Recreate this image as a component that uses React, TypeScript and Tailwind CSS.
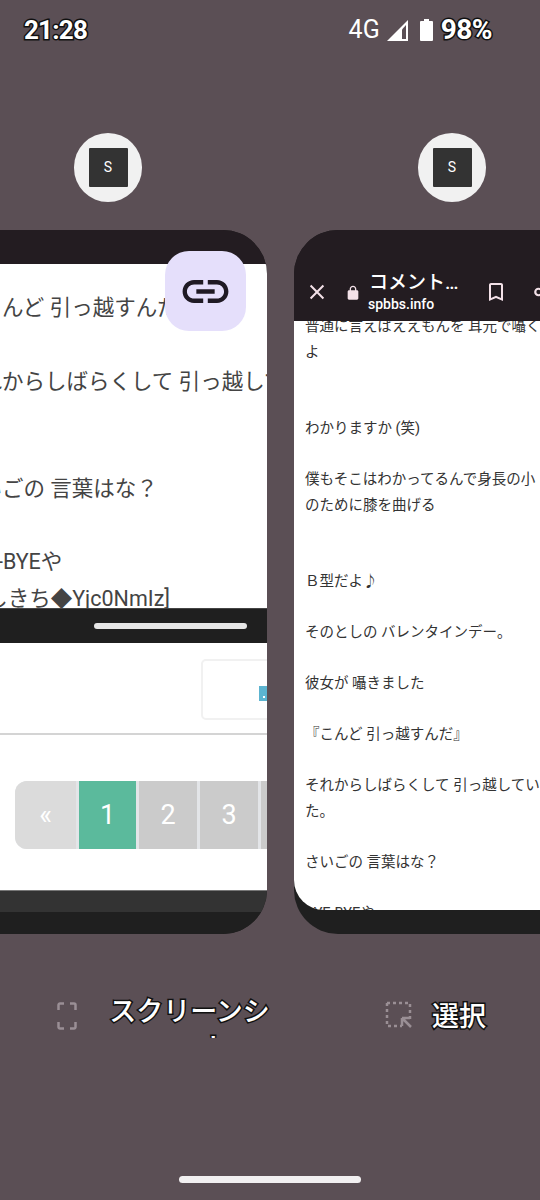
const jp = "font-['Roboto','Noto_Sans_CJK_JP',sans-serif]";

function SiteIcon() {
  return (
    <div className="flex justify-center">
      <div className="w-[68px] h-[69px] rounded-full bg-[#f1f1f1] flex items-center justify-center">
        <div className="w-[39px] h-[39px] rounded-[1px] bg-[#333333] text-white text-[14px] flex items-center justify-center">
          S
        </div>
      </div>
    </div>
  );
}

function LeftCard() {
  const rowCls = "h-[37px] leading-[37px] text-[21.5px] text-[#444444] whitespace-nowrap";
  return (
    <div className="relative mt-[28px] h-[704px] rounded-[44px] overflow-hidden bg-[#1f1f1f] flex flex-col">
      <div className="h-[34px] bg-[#231c21] shrink-0" />
      <div className="h-[344px] bg-white pl-[10px] shrink-0 overflow-hidden">
        <div className={`${rowCls} mt-[25px]`}>『こんど 引っ越すんだ』</div>
        <div className={`${rowCls} mt-[37px]`}>それからしばらくして 引っ越していった。</div>
        <div className={`${rowCls} mt-[70px]`}>さいごの 言葉はな？</div>
        <div className={`${rowCls} mt-[36px]`}>BYE-BYEや</div>
        <div className={rowCls}>[よしきち◆Yjc0NmIz]</div>
      </div>
      <div className="h-[35px] bg-[#1f1f1f] shrink-0 flex items-center pl-[145px] border-t border-[#444444]">
        <div className="w-[153px] h-[6px] rounded-full bg-[#e6e6e6]" />
      </div>
      <div className="h-[247px] bg-white shrink-0 flex flex-col">
        <div className="h-[92px] border-b-2 border-[#d4d4d4] pt-[16px] pl-[252px] shrink-0">
          <div className="w-[100px] h-[61px] rounded-[5px] border-2 border-[#f1f1f1] pt-[25px] pl-[56px]">
            <div className="w-[10px] h-[15px] bg-[#5cb4d0] flex items-end justify-center pb-[3px]">
              <div className="w-[2px] h-[2px] bg-white" />
            </div>
          </div>
        </div>
        <div className="mt-[46px] ml-[66px] h-[68px] flex gap-[3px] bg-[#e3e5e8] w-[320px] rounded-l-[12px] text-[27px] text-white">
          <div className="w-[61px] bg-[#dbdbdb] rounded-l-[12px] flex items-center justify-center">«</div>
          <div className="w-[57px] bg-[#5bba9c] flex items-center justify-center">1</div>
          <div className="w-[58px] bg-[#cbcbcb] flex items-center justify-center">2</div>
          <div className="w-[58px] bg-[#cbcbcb] flex items-center justify-center">3</div>
          <div className="w-[58px] bg-[#cbcbcb]" />
        </div>
      </div>
      <div className="h-[22px] bg-[#333333] shrink-0 border-t border-[#777777]" />
      <div className="flex-1 bg-[#1f1f1f]" />
      <div className="absolute top-[21px] left-[216px] w-[81px] h-[80px] rounded-[24px] bg-[#e5dffb] flex items-center justify-center">
        <svg width="55" height="55" viewBox="0 0 24 24" fill="#1f1a24">
          <path d="M3.9 12c0-1.71 1.39-3.1 3.1-3.1h4V7H7c-2.76 0-5 2.24-5 5s2.24 5 5 5h4v-1.9H7c-1.71 0-3.1-1.39-3.1-3.1zM8 13h8v-2H8v2zm9-6h-4v1.9h4c1.71 0 3.1 1.39 3.1 3.1s-1.39 3.1-3.1 3.1h-4V17h4c2.76 0 5-2.24 5-5s-2.24-5-5-5z" />
        </svg>
      </div>
    </div>
  );
}

const rightLines = [
  "普通に言えばええもんを 耳元で囁く",
  "よ",
  "",
  "",
  "わかりますか (笑)",
  "",
  "僕もそこはわかってるんで身長の小",
  "のために膝を曲げる",
  "",
  "",
  "Ｂ型だよ♪",
  "",
  "そのとしの バレンタインデー。",
  "",
  "彼女が 囁きました",
  "",
  "『こんど 引っ越すんだ』",
  "",
  "それからしばらくして 引っ越してい",
  "た。",
  "",
  "さいごの 言葉はな？",
  "",
  "BYE-BYEや",
];

function RightCard() {
  return (
    <div className="mt-[28px] h-[704px] rounded-[44px] overflow-hidden bg-[#1f1f1f] flex flex-col">
      <div className="h-[91px] bg-[#231c21] shrink-0 flex items-end pb-[8px] text-[#f3e1e8]">
        <svg className="ml-[12px] mb-[10px] shrink-0" width="22" height="22" viewBox="0 0 24 24" fill="none" stroke="currentColor" strokeWidth="2.2">
          <path d="M5 5l14 14M19 5L5 19" />
        </svg>
        <svg className="ml-[17px] mb-[12px] shrink-0" width="16" height="16" viewBox="0 0 24 24" fill="currentColor">
          <path d="M18 8h-1V6c0-2.76-2.24-5-5-5S7 3.24 7 6v2H6c-1.1 0-2 .9-2 2v10c0 1.1.9 2 2 2h12c1.1 0 2-.9 2-2V10c0-1.1-.9-2-2-2zM9 8V6c0-1.66 1.34-3 3-3s3 1.34 3 3v2H9z" />
        </svg>
        <div className="ml-[7px] w-[112px] shrink-0 text-white">
          <div className="text-[19px] leading-[24px] font-medium whitespace-nowrap pl-[1px]">コメント…</div>
          <div className="text-[14px] leading-[18px] font-medium">spbbs.info</div>
        </div>
        <svg className="ml-[4px] mb-[9px] shrink-0" width="24" height="24" viewBox="0 0 24 24" fill="currentColor">
          <path d="M17 3H7c-1.1 0-2 .9-2 2v16l7-3 7 3V5c0-1.1-.9-2-2-2zm0 15-5-2.18L7 18V5h10v13z" />
        </svg>
        <svg className="ml-[24px] mb-[8px] shrink-0" width="26" height="26" viewBox="0 0 24 24" fill="none" stroke="currentColor" strokeWidth="2">
          <circle cx="18" cy="5" r="3" />
          <circle cx="6" cy="12" r="3" />
          <circle cx="18" cy="19" r="3" />
          <path d="M8.6 13.5l6.8 4M15.4 6.5l-6.8 4" />
        </svg>
      </div>
      <div className="h-[589px] bg-white pl-[11px] shrink-0 overflow-hidden rounded-b-[30px] text-[14.5px] leading-[25.5px] text-[#333333]">
        <div className="-mt-[7px]">
          {rightLines.map((line, i) => (
            <div key={i} className="h-[25.5px] whitespace-nowrap">
              {line}
            </div>
          ))}
        </div>
      </div>
    </div>
  );
}

export default function App() {
  const outline = "[paint-order:stroke_fill] [-webkit-text-stroke:3px_#111111]";
  return (
    <div className={`${jp} relative w-[540px] h-[1200px] overflow-hidden bg-[#5b4f55] flex flex-col`}>
      <div className="h-[60px] shrink-0 flex items-center justify-between pl-[24px] pr-[48px] text-white">
        <span className={`text-[26px] tracking-[-0.8px] font-bold ${outline}`}>21:28</span>
        <div className="flex items-center">
          <span className="text-[25px] mr-[7px]">4G</span>
          <svg className="mr-[12px]" width="21" height="21" viewBox="0 0 21 21">
            <path d="M21 0v21H0z" fill="#ffffff" />
            <path d="M15 9.500V19h4V5z" fill="#5b4f55" />
          </svg>
          <svg className="mr-[8px]" width="13" height="22" viewBox="0 0 13 22">
            <path d="M4 0h5v2h3a1 1 0 0 1 1 1v18a1 1 0 0 1-1 1H1a1 1 0 0 1-1-1V3a1 1 0 0 1 1-1h3z" fill="#ffffff" />
          </svg>
          <span className={`text-[28px] tracking-[-0.5px] font-bold ${outline}`}>98%</span>
        </div>
      </div>

      <div className="flex gap-[27px] ml-[-51px] mt-[73px] shrink-0">
        <div className="w-[318px] shrink-0">
          <SiteIcon />
          <LeftCard />
        </div>
        <div className="w-[316px] shrink-0">
          <SiteIcon />
          <RightCard />
        </div>
      </div>

      <div className="flex items-start mt-[60px] ml-[57px] shrink-0">
        <svg className="mt-[8px] shrink-0" width="20" height="28" viewBox="0 0 20 28" fill="none" stroke="#9a8f95" strokeWidth="2.5">
          <path d="M1.5 8V3a1.5 1.5 0 0 1 1.5-1.5h4M13 1.5h4A1.5 1.5 0 0 1 18.500 3v5M18.500 20v5a1.500 1.500 0 0 1-1.500 1.500h-4M7 26.500H3A1.500 1.500 0 0 1 1.500 25v-5" />
        </svg>
        <div className={`ml-[31px] w-[163px] h-[44px] overflow-hidden text-center text-[27px] font-medium leading-[36px] text-white ${outline}`}>
          <div>スクリーンシ</div>
          <div>ョット</div>
        </div>
        <svg className="ml-[114px] mt-[7px] shrink-0" width="28" height="28" viewBox="0 0 28 28" fill="none" stroke="#9a8f95" strokeWidth="2.500">
          <path d="M2 2h23v16M2 2v23h15" strokeDasharray="3 3" />
          <path d="M17 17h8M17 17v8M17 17l9 9" stroke="#9a8f95" />
        </svg>
        <div className={`ml-[19px] mt-[5px] text-[27px] font-medium leading-[36px] text-white ${outline}`}>選択</div>
      </div>

      <div className="mt-auto mb-[17px] mx-auto w-[182px] h-[7px] rounded-full bg-[#f2f0f1]" />
    </div>
  );
}
